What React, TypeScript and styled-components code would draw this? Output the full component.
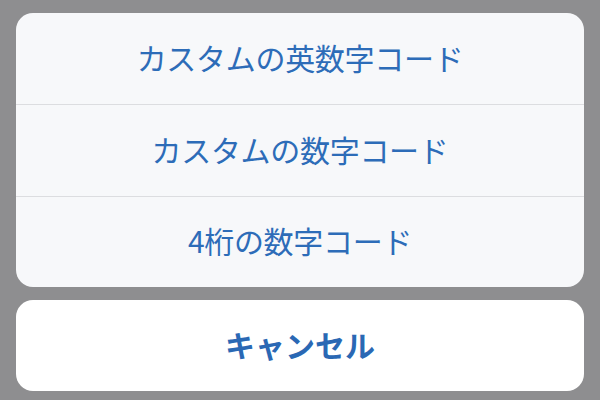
import React from 'react';
import styled, { createGlobalStyle } from 'styled-components';

const GlobalStyle = createGlobalStyle`
    html, body {
        margin: 0;
        padding: 0;
        background: #8e8e90;
    }
    #root {
        height: 400px;
    }
`;

const Screen = styled.div`
    display: flex;
    flex-direction: column;
    gap: 13px;
    height: 400px;
    box-sizing: border-box;
    padding: 13px 16px 0;
    background: #8e8e90;
    font-family: "Noto Sans CJK JP", "Noto Sans", sans-serif;
`;

const Group = styled.div`
    display: flex;
    flex-direction: column;
    background: #f7f8fa;
    border-radius: 17px;
    overflow: hidden;
`;

const Option = styled.div<{ $last?: boolean }>`
    display: flex;
    align-items: center;
    justify-content: center;
    box-sizing: border-box;
    padding-bottom: 4px;
    height: ${({ $last }) => ($last ? '90px' : '92px')};
    border-bottom: ${({ $last }) => ($last ? 'none' : '1px solid #dcdde0')};
    color: #2d6cb8;
    font-size: 30px;
    font-weight: 400;
    letter-spacing: -0.3px;
`;

const Cancel = styled.div`
    display: flex;
    align-items: center;
    justify-content: center;
    box-sizing: border-box;
    padding-bottom: 4px;
    height: 91px;
    background: #ffffff;
    border-radius: 17px;
    color: #2a68b4;
    font-size: 30px;
    font-weight: 700;
`;

const options = ['カスタムの英数字コード', 'カスタムの数字コード', '4桁の数字コード'];

export default function App() {
    return (
        <>
            <GlobalStyle />
            <Screen>
                <Group>
                    {options.map((label, i) => (
                        <Option key={label} $last={i === options.length - 1}>
                            {label}
                        </Option>
                    ))}
                </Group>
                <Cancel>キャンセル</Cancel>
            </Screen>
        </>
    );
}
